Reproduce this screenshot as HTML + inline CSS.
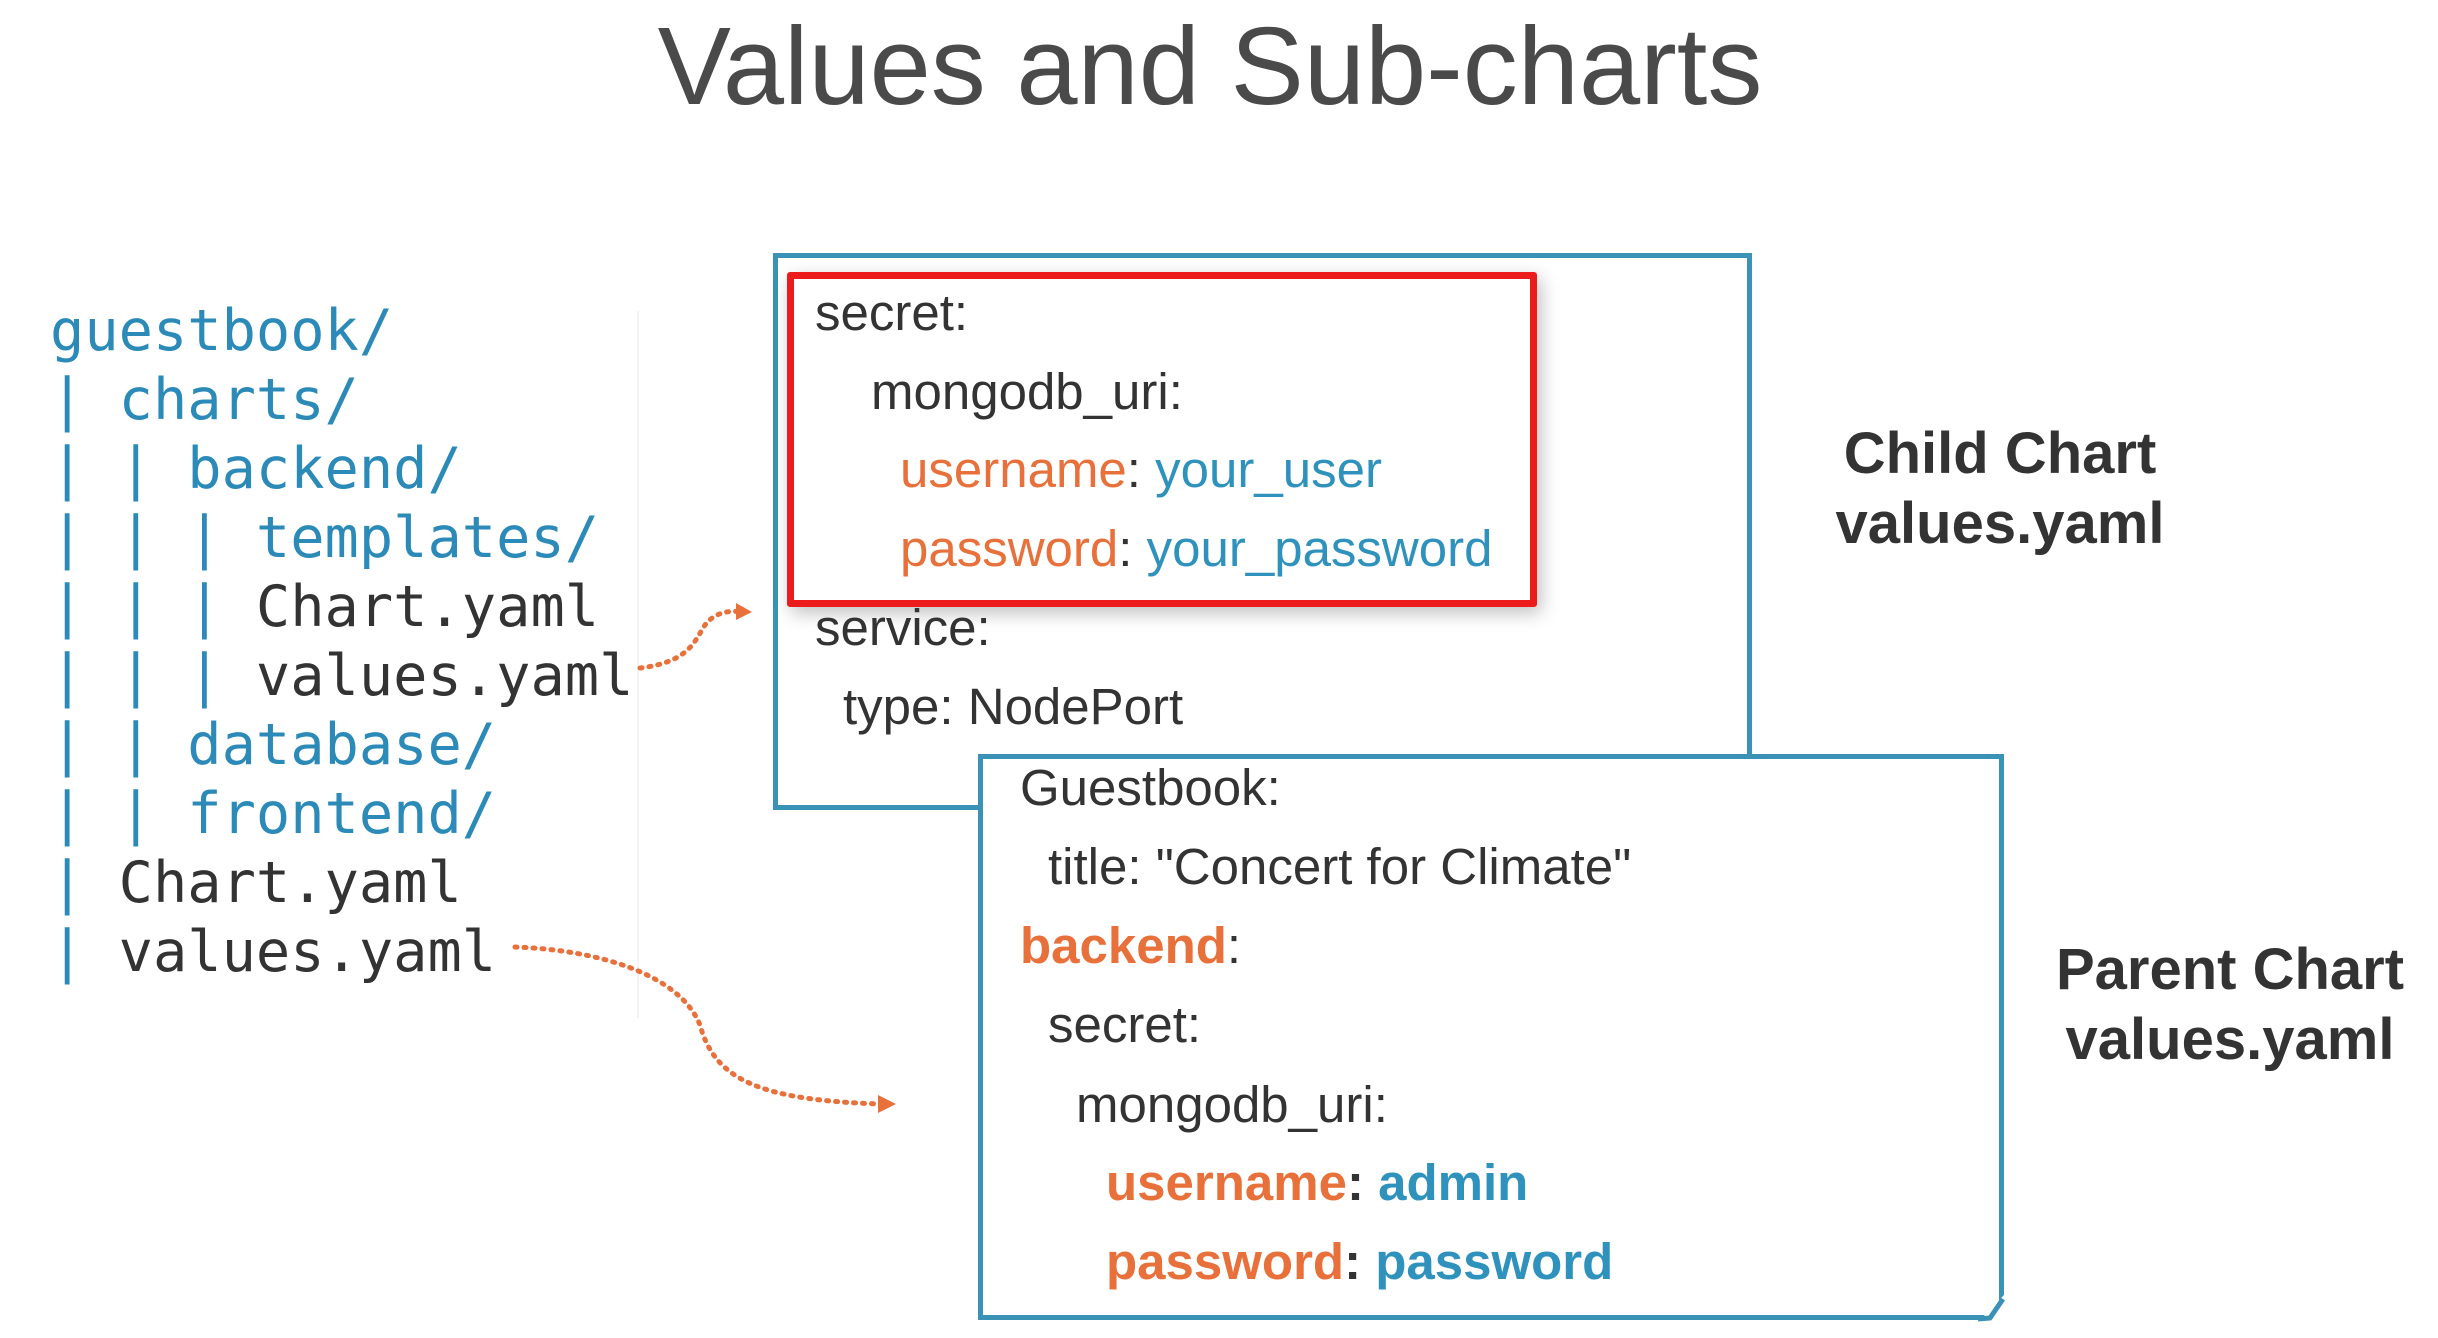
<!DOCTYPE html>
<html><head><meta charset="utf-8"><style>
html,body{margin:0;padding:0;background:#fff;}
body{width:2438px;height:1338px;position:relative;overflow:hidden;font-family:"Liberation Sans",Arial,sans-serif;}
#title{position:absolute;left:0;width:2420px;text-align:center;top:2px;font-size:110px;color:#4a4a4a;line-height:130px;white-space:pre;}
.tree{position:absolute;left:50px;top:297px;font-family:"DejaVu Sans Mono","Liberation Mono",monospace;font-size:57px;line-height:69px;color:#2b8ab8;white-space:pre;}
.tree .d{color:#333;}
.box{position:absolute;border:5px solid #3a93b6;background:#fff;box-sizing:border-box;}
.code{position:absolute;font-size:51px;line-height:78.7px;color:#333;white-space:pre;}
.o{color:#e8703a;}.b{color:#2e92bd;}
.lbl{position:absolute;font-weight:bold;font-size:58px;color:#333;text-align:center;line-height:70px;}
</style></head><body>
<div id="title">Values and Sub-charts</div>
<div style="position:absolute;left:637px;top:311px;width:2px;height:707px;background:#f3f3f3"></div>
<div class="tree">guestbook/
| charts/
| | backend/
| | | templates/
| | | <span class="d">Chart.yaml</span>
| | | <span class="d">values.yaml</span>
| | database/
| | frontend/
| <span class="d">Chart.yaml</span>
| <span class="d">values.yaml</span></div>

<div class="box" style="left:773px;top:253px;width:979px;height:557px;"></div>
<div style="position:absolute;left:787px;top:272px;width:750px;height:335px;border:7px solid #ec1c1c;box-sizing:border-box;box-shadow:4px 6px 18px rgba(0,0,0,0.25);border-radius:3px;background:#fff"></div>
<div class="code" style="left:815px;top:274px;">secret:</div>
<div class="code" style="left:871px;top:352.7px;">mongodb_uri:</div>
<div class="code" style="left:900px;top:431.4px;"><span class="o">username</span>: <span class="b">your_user</span>
<span class="o">password</span>: <span class="b">your_password</span></div>
<div class="code" style="left:815px;top:588.8px;">service:</div>
<div class="code" style="left:843px;top:667.5px;">type: NodePort</div>

<div class="box" style="left:978px;top:754px;width:1026px;height:566px;"></div>
<svg style="position:absolute;left:1970px;top:1285px" width="40" height="40"><polygon points="10,35 34,35 34,10" fill="#fff"/><path d="M8,34 L20,33 L33,14" stroke="#3a93b6" stroke-width="5" fill="none"/></svg>
<div class="code" style="left:1020px;top:749px;">Guestbook:</div>
<div class="code" style="left:1048px;top:828px;">title: "Concert for Climate"</div>
<div class="code" style="left:1020px;top:907px;"><b class="o">backend</b>:</div>
<div class="code" style="left:1048px;top:986px;">secret:</div>
<div class="code" style="left:1076px;top:1066px;">mongodb_uri:</div>
<div class="code" style="left:1106px;top:1144px;font-weight:bold;"><span class="o">username</span>: <span class="b">admin</span>
<span class="o">password</span>: <span class="b">password</span></div>

<div class="lbl" style="left:1800px;top:419px;width:400px;">Child Chart<br>values.yaml</div>
<div class="lbl" style="left:2030px;top:935px;width:400px;">Parent Chart<br>values.yaml</div>

<svg style="position:absolute;left:0;top:0" width="2438" height="1338">
<path d="M640,668 C690,662 695,640 705,625 C715,612 730,610 742,612" stroke="#e8703a" stroke-width="5" stroke-dasharray="2 7" stroke-linecap="round" fill="none"/>
<polygon points="736,603 752,612 736,620" fill="#e8703a"/>
<path d="M515,947 C600,950 680,975 700,1025 C715,1080 760,1100 880,1104" stroke="#e8703a" stroke-width="5" stroke-dasharray="2 7" stroke-linecap="round" fill="none"/>
<polygon points="878,1095 896,1104 878,1113" fill="#e8703a"/>
</svg>
</body></html>
